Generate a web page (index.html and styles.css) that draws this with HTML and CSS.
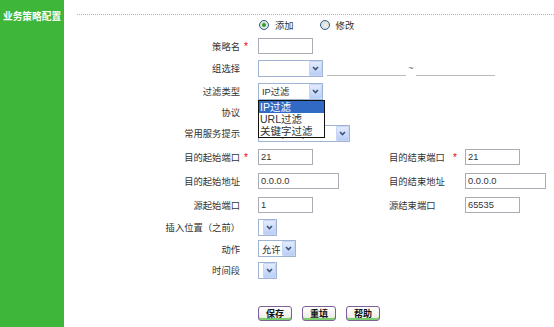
FILE: index.html
```html
<!DOCTYPE html>
<html>
<head>
    <meta charset="utf-8">
    <title>业务策略配置</title>
    <link rel="stylesheet" href="styles.css">
</head>
<body>
<div class="page">
    <aside class="side">
        <h1>业务策略配置</h1>
    </aside>
    <main class="main">
        <div class="rule"></div>

        <div class="form">
            <!-- 添加 / 修改 -->
            <div class="lbl"></div>
            <div class="fld wide radios">
                <label class="radio"><span class="dot on"></span>添加</label>
                <label class="radio"><span class="dot"></span>修改</label>
            </div>

            <div class="lbl">策略名</div>
            <div class="req">*</div>
            <div class="fld"><input class="txt" type="text" value=""></div>

            <div class="lbl">组选择</div>
            <div class="fld wide">
                <div class="sel"><span class="val"></span><span class="arr"><svg width="7" height="5" viewBox="0 0 7 5"><path d="M1 1 L3.5 3.5 L6 1" fill="none" stroke="#3f5377" stroke-width="1.6"/></svg></span></div>
                <span class="line"></span>
                <span class="tilde">~</span>
                <span class="line"></span>
            </div>

            <div class="lbl">过滤类型</div>
            <div class="fld">
                <div class="sel open"><span class="val">IP过滤</span><span class="arr"><svg width="7" height="5" viewBox="0 0 7 5"><path d="M1 1 L3.5 3.5 L6 1" fill="none" stroke="#3f5377" stroke-width="1.6"/></svg></span>
                    <ul class="list">
                        <li class="hot">IP过滤</li>
                        <li>URL过滤</li>
                        <li>关键字过滤</li>
                    </ul>
                </div>
            </div>

            <div class="lbl">协议</div>
            <div class="fld">
                <div class="sel"><span class="val"></span><span class="arr"><svg width="7" height="5" viewBox="0 0 7 5"><path d="M1 1 L3.5 3.5 L6 1" fill="none" stroke="#3f5377" stroke-width="1.6"/></svg></span></div>
            </div>

            <div class="lbl">常用服务提示</div>
            <div class="fld">
                <div class="sel long"><span class="val">全部(所有)</span><span class="arr"><svg width="7" height="5" viewBox="0 0 7 5"><path d="M1 1 L3.5 3.5 L6 1" fill="none" stroke="#3f5377" stroke-width="1.6"/></svg></span></div>
            </div>

            <div class="lbl">目的起始端口</div>
            <div class="req">*</div>
            <div class="fld"><input class="txt" type="text" value="21"></div>
            <div class="lbl2">目的结束端口</div>
            <div class="req2">*</div>
            <div class="fld2"><input class="txt" type="text" value="21"></div>

            <div class="lbl">目的起始地址</div>
            <div class="fld"><input class="txt addr" type="text" value="0.0.0.0"></div>
            <div class="lbl2">目的结束地址</div>
            <div class="fld2"><input class="txt addr" type="text" value="0.0.0.0"></div>

            <div class="lbl">源起始端口</div>
            <div class="fld"><input class="txt" type="text" value="1"></div>
            <div class="lbl2">源结束端口</div>
            <div class="fld2"><input class="txt" type="text" value="65535"></div>

            <div class="lbl">插入位置（之前）</div>
            <div class="fld">
                <div class="sel tiny"><span class="val"></span><span class="arr"><svg width="7" height="5" viewBox="0 0 7 5"><path d="M1 1 L3.5 3.5 L6 1" fill="none" stroke="#3f5377" stroke-width="1.6"/></svg></span></div>
            </div>

            <div class="lbl">动作</div>
            <div class="fld">
                <div class="sel short"><span class="val">允许</span><span class="arr"><svg width="7" height="5" viewBox="0 0 7 5"><path d="M1 1 L3.5 3.5 L6 1" fill="none" stroke="#3f5377" stroke-width="1.6"/></svg></span></div>
            </div>

            <div class="lbl">时间段</div>
            <div class="fld">
                <div class="sel tiny"><span class="val"></span><span class="arr"><svg width="7" height="5" viewBox="0 0 7 5"><path d="M1 1 L3.5 3.5 L6 1" fill="none" stroke="#3f5377" stroke-width="1.6"/></svg></span></div>
            </div>
        </div>

        <div class="actions">
            <button class="btn">保存</button>
            <button class="btn">重填</button>
            <button class="btn">帮助</button>
        </div>
    </main>
</div>
</body>
</html>
```

FILE: styles.css
```css
html, body {
    margin: 0;
    padding: 0;
    background: #fff;
}

body {
    font-family: "Liberation Sans", "Noto Sans CJK SC", sans-serif;
    font-size: 9.3px;
    color: #333;
}

.page {
    display: flex;
    height: 100vh;
}

.side {
    width: 64px;
    flex: none;
    background-color: #3db63a;
}

.side h1 {
    margin: 0;
    padding: 12px 0 0 3px;
    font-size: 9.7px;
    line-height: 10px;
    font-weight: bold;
    color: #fff;
    white-space: nowrap;
}

.main {
    flex: 1;
}

.rule {
    margin: 14px 0 0 13px;
    height: 0;
    border-top: 1px dotted #8ccf89;
}

.form {
    display: grid;
    grid-template-columns: 177px 17px 131px 64px 12px 1fr;
    grid-template-rows: 20px 21px 24px 22px 20px 22px 25px 24px 23px 22px 21px 22px;
    align-items: center;
}

.lbl {
    grid-column: 1;
    text-align: right;
    padding-right: 1px;
    white-space: nowrap;
}

.req {
    grid-column: 2;
    padding-left: 3px;
}

.fld {
    grid-column: 3;
    display: flex;
    align-items: center;
}

.fld.wide {
    grid-column: 3 / 7;
}

.lbl2 {
    grid-column: 4;
    white-space: nowrap;
}

.req2 {
    grid-column: 5;
}

.fld2 {
    grid-column: 6;
    display: flex;
    align-items: center;
}

.req, .req2 {
    color: #e00;
    font-size: 10px;
    line-height: 10px;
    margin-top: 2px;
}

/* radios */
.radio {
    display: flex;
    align-items: center;
}

.radio + .radio {
    margin-left: 25px;
}

.dot {
    width: 10px;
    height: 10px;
    box-sizing: border-box;
    margin: 0 6px 0 1px;
    border: 1px solid #2b5f8e;
    border-radius: 50%;
    background: radial-gradient(circle at 60% 60%, #f0efe9, #d6d5cf);
    display: flex;
    align-items: center;
    justify-content: center;
}

.dot.on::after {
    content: "";
    width: 4px;
    height: 4px;
    border-radius: 50%;
    background: #2aa12a;
}

/* text fields */
.txt {
    box-sizing: border-box;
    width: 55px;
    height: 16px;
    margin: 0;
    padding: 0 2px;
    border: 1px solid #a9adb3;
    font: inherit;
    font-size: 9.3px;
    color: #333;
    background: #fff;
    outline: none;
}

.txt.addr {
    width: 81px;
}

/* select boxes */
.sel {
    position: relative;
    box-sizing: border-box;
    width: 65px;
    height: 17px;
    display: flex;
    align-items: center;
    border: 1px solid #9fb3d2;
    background: #fff;
    padding-left: 3px;
}

.sel.long {
    width: 92px;
}

.sel.short {
    width: 38px;
}

.sel.tiny {
    width: 19px;
}

.sel .val {
    flex: 1;
    white-space: nowrap;
    overflow: hidden;
}

.sel .arr {
    flex: none;
    box-sizing: border-box;
    width: 13px;
    height: 15px;
    border: 1px solid #c6d5f3;
    border-radius: 1px;
    background: linear-gradient(#e3ecfd, #b9cdf6);
    display: flex;
    align-items: center;
    justify-content: center;
}

.list {
    position: absolute;
    left: -1px;
    top: calc(100% + 1px);
    z-index: 2;
    width: 67px;
    box-sizing: border-box;
    margin: 0;
    padding: 0;
    list-style: none;
    border: 1px solid #111;
    background: #fff;
    font-size: 10.5px;
    line-height: 12px;
    color: #333;
}

.list li {
    padding-left: 1px;
    white-space: nowrap;
}

.list li.hot {
    background: #316ac5;
    color: #fff;
}

.line {
    width: 79px;
    height: 0;
    border-top: 1px solid #bcbcbc;
    margin-top: 14px;
}

.line:nth-of-type(1) {
    margin-left: 4px;
}

.tilde {
    width: 10px;
    text-align: center;
    color: #666;
    font-size: 9px;
}

/* buttons */
.actions {
    display: flex;
    gap: 10px;
    margin: 25px 0 0 194px;
}

.btn {
    box-sizing: border-box;
    width: 34px;
    height: 15px;
    padding: 0;
    border: 1px solid #7c6299;
    border-radius: 3px;
    background: linear-gradient(#ffffff, #ebe9e3);
    box-shadow: inset 0 -2px 0 #78cf6b;
    font: inherit;
    font-size: 9px;
    font-weight: bold;
    line-height: 12px;
    color: #111;
}
```
